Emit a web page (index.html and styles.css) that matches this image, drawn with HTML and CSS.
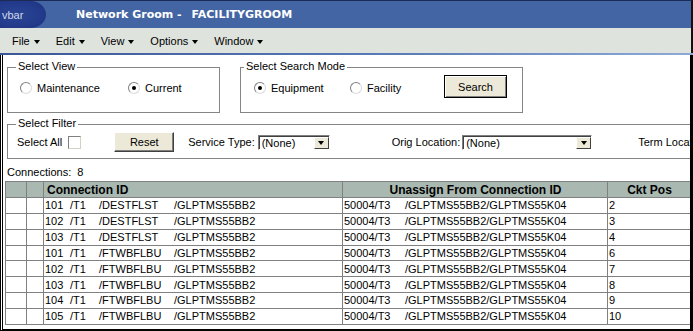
FILE: index.html
```html
<!DOCTYPE html>
<html lang="en">
<head>
    <meta charset="UTF-8">
    <title>Network Groom - FACILITYGROOM</title>
    <link rel="stylesheet" href="styles.css">
</head>
<body>
    <div class="titlebar">
        <div class="navtab">vbar</div>
        <div class="title">Network Groom - <span class="title-name">FACILITYGROOM</span></div>
    </div>

    <div class="menubar">
        <span class="menu">File</span>
        <span class="menu">Edit</span>
        <span class="menu">View</span>
        <span class="menu">Options</span>
        <span class="menu">Window</span>
    </div>
    <div class="menu-line"></div>

    <div class="content">
        <div class="top-row">
            <!-- View -->
            <fieldset class="group view-group">
                <legend>Select View</legend>
                <div class="group-row">
                    <span class="radio radio-maint"><i class="radio-dot"></i>Maintenance</span>
                    <span class="radio"><i class="radio-dot checked"></i>Current</span>
                </div>
            </fieldset>

            <!-- Search mode -->
            <fieldset class="group mode-group">
                <legend>Select Search Mode</legend>
                <div class="group-row">
                    <span class="radio radio-equip"><i class="radio-dot checked"></i>Equipment</span>
                    <span class="radio radio-facility"><i class="radio-dot"></i>Facility</span>
                    <button class="btn btn-default">Search</button>
                </div>
            </fieldset>
        </div>

        <!-- Filter -->
        <fieldset class="group filter-group">
            <legend>Select Filter</legend>
            <div class="filter-row">
                <span>Select All</span>
                <span class="checkbox"></span>
                <button class="btn btn-reset">Reset</button>
                <span class="label-service">Service Type:</span>
                <span class="combo combo-service"><span class="combo-text">(None)</span><span class="combo-btn"></span></span>
                <span class="label-orig">Orig Location:</span>
                <span class="combo combo-orig"><span class="combo-text">(None)</span><span class="combo-btn"></span></span>
                <span class="label-term">Term Location:</span>
            </div>
        </fieldset>

        <div class="count">Connections:<span class="count-num">8</span></div>

        <table class="grid">
            <colgroup>
                <col class="col-a">
                <col class="col-b">
                <col class="col-id">
                <col class="col-un">
                <col>
            </colgroup>
            <thead>
                <tr>
                    <th></th>
                    <th></th>
                    <th class="th-id">Connection ID</th>
                    <th class="th-center">Unassign From Connection ID</th>
                    <th class="th-center">Ckt Pos</th>
                </tr>
            </thead>
            <tbody>
                <tr>
                    <td></td><td></td>
                    <td><span class="c1">101</span><span class="c2">/T1</span><span class="c3">/DESTFLST</span>/GLPTMS55BB2</td>
                    <td><span class="u1">50004/T3</span>/GLPTMS55BB2/GLPTMS55K04</td>
                    <td>2</td>
                </tr>
                <tr>
                    <td></td><td></td>
                    <td><span class="c1">102</span><span class="c2">/T1</span><span class="c3">/DESTFLST</span>/GLPTMS55BB2</td>
                    <td><span class="u1">50004/T3</span>/GLPTMS55BB2/GLPTMS55K04</td>
                    <td>3</td>
                </tr>
                <tr>
                    <td></td><td></td>
                    <td><span class="c1">103</span><span class="c2">/T1</span><span class="c3">/DESTFLST</span>/GLPTMS55BB2</td>
                    <td><span class="u1">50004/T3</span>/GLPTMS55BB2/GLPTMS55K04</td>
                    <td>4</td>
                </tr>
                <tr>
                    <td></td><td></td>
                    <td><span class="c1">101</span><span class="c2">/T1</span><span class="c3">/FTWBFLBU</span>/GLPTMS55BB2</td>
                    <td><span class="u1">50004/T3</span>/GLPTMS55BB2/GLPTMS55K04</td>
                    <td>6</td>
                </tr>
                <tr>
                    <td></td><td></td>
                    <td><span class="c1">102</span><span class="c2">/T1</span><span class="c3">/FTWBFLBU</span>/GLPTMS55BB2</td>
                    <td><span class="u1">50004/T3</span>/GLPTMS55BB2/GLPTMS55K04</td>
                    <td>7</td>
                </tr>
                <tr>
                    <td></td><td></td>
                    <td><span class="c1">103</span><span class="c2">/T1</span><span class="c3">/FTWBFLBU</span>/GLPTMS55BB2</td>
                    <td><span class="u1">50004/T3</span>/GLPTMS55BB2/GLPTMS55K04</td>
                    <td>8</td>
                </tr>
                <tr>
                    <td></td><td></td>
                    <td><span class="c1">104</span><span class="c2">/T1</span><span class="c3">/FTWBFLBU</span>/GLPTMS55BB2</td>
                    <td><span class="u1">50004/T3</span>/GLPTMS55BB2/GLPTMS55K04</td>
                    <td>9</td>
                </tr>
                <tr>
                    <td></td><td></td>
                    <td><span class="c1">105</span><span class="c2">/T1</span><span class="c3">/FTWBFLBU</span>/GLPTMS55BB2</td>
                    <td><span class="u1">50004/T3</span>/GLPTMS55BB2/GLPTMS55K04</td>
                    <td>10</td>
                </tr>
            </tbody>
        </table>
    </div>
</body>
</html>
```

FILE: styles.css
```css
* {
    margin: 0;
    padding: 0;
    box-sizing: border-box;
}

body {
    width: 693px;
    height: 331px;
    overflow: hidden;
    background: #fff;
    font-family: "Liberation Sans", Arial, sans-serif;
    font-size: 11px;
    color: #000;
}

/* Title bar */
.titlebar {
    height: 28px;
    display: flex;
    align-items: center;
    background: #4365a4;
    border-top: 1px solid #1b2b55;
    border-right: 2px solid #111;
}

.navtab {
    align-self: stretch;
    width: 46px;
    padding-left: 2px;
    display: flex;
    align-items: center;
    background: radial-gradient(ellipse at 35% 50%, #2a4594 0%, #233a8b 65%, #1a2e7a 100%);
    border-radius: 0 16px 16px 0 / 0 14px 14px 0;
    color: #cfd8ea;
    font-size: 11px;
}

.title {
    margin-left: 30px;
    font-family: "DejaVu Sans", Verdana, sans-serif;
    font-weight: bold;
    font-size: 11px;
    color: #fff;
}

.title-name {
    margin-left: 6px;
}

/* Menu */
.menubar {
    height: 25px;
    display: flex;
    align-items: center;
    gap: 16px;
    padding-left: 12px;
    background: #dee3dd;
    border-right: 2px solid #111;
}

.menu::after {
    content: "";
    display: inline-block;
    margin-left: 4px;
    vertical-align: middle;
    border-top: 4px solid #000;
    border-left: 3px solid transparent;
    border-right: 3px solid transparent;
}

.menu-line {
    height: 2px;
    background: linear-gradient(to right, #3a5898, #5b7dba 60%, #8eabd7);
}

/* Content frame */
.content {
    height: 276px;
    padding-top: 5px;
    border-left: 3px double #000;
    border-right: 3px solid #000;
    border-bottom: 2px solid #000;
    overflow: hidden;
}

.top-row {
    display: flex;
    gap: 20px;
    padding-left: 4px;
}

.group {
    min-width: 0;
    padding: 0;
    border: 1px solid #858585;
}

.group legend {
    margin-left: 8px;
    padding: 0 2px 3px;
    line-height: 12px;
}

.mode-group legend {
    margin-left: 3px;
}

.view-group {
    width: 213px;
    height: 53px;
}

.mode-group {
    width: 283px;
    height: 53px;
}

.group-row {
    display: flex;
    align-items: center;
    height: 26px;
}

.view-group .group-row {
    padding-left: 12px;
}

.mode-group .group-row {
    padding-left: 13px;
}

.radio {
    display: flex;
    align-items: center;
}

.radio-maint {
    width: 108px;
}

.radio-equip {
    width: 96px;
}

.radio-facility {
    width: 94px;
}

.radio-dot {
    position: relative;
    width: 12px;
    height: 12px;
    margin-right: 5px;
    border: 1px solid;
    border-color: #808080 #dcdcdc #dcdcdc #808080;
    border-radius: 50%;
    background: #fff;
}

.radio-dot.checked::after {
    content: "";
    position: absolute;
    left: 3px;
    top: 3px;
    width: 4px;
    height: 4px;
    border-radius: 50%;
    background: #000;
}

/* Buttons */
.btn {
    font: inherit;
    color: #000;
    background: #ece9d8;
}

.btn-default {
    align-self: flex-start;
    width: 63px;
    height: 23px;
    border: 1px solid #000;
    box-shadow: inset 1px 1px #fff, inset -1px -1px #808080;
}

.btn-reset {
    width: 60px;
    height: 20px;
    margin-left: 33px;
    border: 1px solid;
    border-color: #fff #404040 #404040 #fff;
    box-shadow: inset -1px -1px #808080;
}

/* Filter */
.filter-group {
    flex-shrink: 0;
    width: 760px;
    height: 42px;
    margin: 4px 0 0 4px;
}

.filter-row {
    display: flex;
    align-items: center;
    height: 20px;
    padding-left: 9px;
    white-space: nowrap;
}

.checkbox {
    width: 13px;
    height: 13px;
    margin-left: 6px;
    border: 1px solid;
    border-color: #808080 #d4d0c8 #d4d0c8 #808080;
    background: #fff;
}

.label-service {
    margin-left: 14px;
}

.label-orig {
    margin-left: 62px;
}

.label-term {
    margin-left: 46px;
}

.combo {
    display: flex;
    height: 15px;
    margin-left: 3px;
    border: 1px solid;
    border-color: #808080 #fff #fff #808080;
    box-shadow: inset 1px 1px #404040;
    background: #fff;
}

.combo-service {
    width: 72px;
}

.combo-orig {
    width: 130px;
    margin-left: 2px;
}

.combo-text {
    flex: 1;
    padding: 1px 0 0 3px;
    line-height: 12px;
}

.combo-btn {
    display: flex;
    align-items: center;
    justify-content: center;
    width: 15px;
    margin-top: 1px;
    background: #ece9d8;
    border: 1px solid;
    border-color: #fff #404040 #404040 #fff;
}

.combo-btn::after {
    content: "";
    border-top: 4px solid #000;
    border-left: 3.5px solid transparent;
    border-right: 3.5px solid transparent;
}

.count {
    margin: 7px 0 0 4px;
    line-height: 13px;
}

.count-num {
    margin-left: 6px;
}

/* Grid */
.grid {
    width: 686px;
    margin: 2px 0 0 2px;
    border-collapse: collapse;
    table-layout: fixed;
}

.col-a {
    width: 21px;
}

.col-b {
    width: 17px;
}

.col-id {
    width: 299px;
}

.col-un {
    width: 265px;
}

.grid th,
.grid td {
    height: 15.85px;
    padding: 0 0 0 1px;
    border: 1px solid #808080;
    line-height: 14px;
    text-align: left;
    white-space: nowrap;
    overflow: hidden;
}

.grid th {
    height: 16px;
    background: #a9b8b1;
    font-size: 12px;
    font-weight: bold;
}

.grid .th-id {
    padding-left: 3px;
}

.grid .th-center {
    text-align: center;
}

.c1,
.c2,
.c3,
.u1 {
    display: inline-block;
}

.c1 {
    width: 25px;
}

.c2 {
    width: 29px;
}

.c3 {
    width: 75px;
}

.u1 {
    width: 61px;
}
```
